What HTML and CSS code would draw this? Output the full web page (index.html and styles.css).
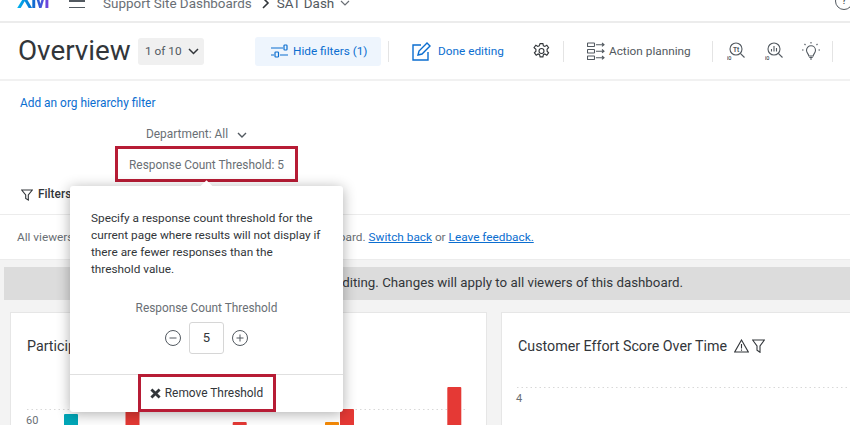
FILE: index.html
```html
<!DOCTYPE html>
<html lang="en">
<head>
<meta charset="utf-8">
<title>SAT Dash</title>
<link rel="stylesheet" href="styles.css">
</head>
<body>
<div class="page">
  <header class="topbar">
    <span class="logo">XM</span>
    <span class="burger"><i></i><i></i></span>
    <span class="crumb">Support Site Dashboards</span>
    <svg class="crumb-sep" width="8" height="12" viewBox="0 0 8 12"><path d="M1 1l5 5-5 5" fill="none" stroke="#32363a" stroke-width="1.6"/></svg>
    <span class="crumb crumb-current">SAT Dash</span>
    <svg class="crumb-caret" width="10" height="6" viewBox="0 0 10 6"><path d="M1 1l4 4 4-4" fill="none" stroke="#6a6f75" stroke-width="1.2"/></svg>
    <span class="help">?</span>
  </header>

  <section class="toolbar">
    <h1 class="title">Overview</h1>
    <button class="pager">1 of 10
      <svg width="11" height="7" viewBox="0 0 11 7"><path d="M1 1l4.500 4.500L10 1" fill="none" stroke="#32363a" stroke-width="1.500"/></svg>
    </button>
    <button class="hide-filters">
      <svg width="17" height="14" viewBox="0 0 17 14" fill="none" stroke="#0b6ed0" stroke-width="1.200"><path d="M0 4h12M0 11h3M9 11h8"/><rect x="13" y="1" width="3" height="5" rx=".8"/><rect x="4" y="8" width="3.500" height="5" rx=".8"/></svg>
      Hide filters (1)
    </button>
    <span class="sep sep-a"></span>
    <svg class="edit-icon" width="19" height="19" viewBox="0 0 19 19" fill="none" stroke="#0b6ed0" stroke-width="1.400"><path d="M9 3H1v15h15v-8"/><path d="M6 13l1-4L15 1l3 3-8 8z"/></svg>
    <span class="done">Done editing</span>
    <svg class="gear" width="17" height="18" viewBox="0 0 24 24" fill="none" stroke="#32363a" stroke-width="1.600"><circle cx="12" cy="12" r="3.500"/><path d="M10 1.500h4l.7 3.200 2 .9 2.800-1.700 2.500 3.400-2.100 2.200v2.800l2.100 2.200-2.500 3.400-2.800-1.700-2 .9-.7 3.200h-4l-.7-3.200-2-.9-2.800 1.700-2.500-3.400 2.100-2.200V9.500L1.500 7.300 4 3.900l2.800 1.700 2-.9z"/></svg>
    <span class="sep sep-b"></span>
    <svg class="plan-icon" width="18" height="18" viewBox="0 0 18 18" fill="none" stroke="#525960" stroke-width="1.100"><rect x=".5" y="1" width="7" height="3.500" rx=".5"/><rect x=".5" y="7.500" width="7" height="3.500" rx=".5"/><rect x=".5" y="14" width="7" height="3.500" rx=".5"/><path d="M9 2.700h8M9 9.200h8M9 15.700h8M15 1l2 1.700-2 1.700M15 7.500l2 1.700-2 1.700M15 14l2 1.700-2 1.700"/></svg>
    <span class="plan">Action planning</span>
    <span class="sep sep-c"></span>
    <svg class="iq iq-a" width="18" height="18" viewBox="0 0 18 18" fill="none" stroke="#525960" stroke-width="1.100"><circle cx="9" cy="7" r="6"/><path d="M13.300 11.300L17.500 15.500"/><text class="iq-glyph" x="9" y="9.500">Tt</text><text class="iq-tag" x="0" y="18">iQ</text></svg>
    <svg class="iq iq-b" width="18" height="18" viewBox="0 0 18 18" fill="none" stroke="#525960" stroke-width="1.100"><circle cx="9" cy="7" r="6"/><path d="M13.300 11.300L17.500 15.500"/><path d="M6.500 7v2.500M9 4v5.500M11.500 6v3.500" stroke-width="1.100"/><text class="iq-tag" x="0" y="18">iQ</text></svg>
    <svg class="bulb" width="18" height="18" viewBox="0 0 18 18" fill="none" stroke="#525960" stroke-width="1.100"><path d="M6.800 14c0-2-2.300-3-2.300-5.700a4.500 4.500 0 0 1 9 0C13.500 11 11.200 12 11.200 14z"/><path d="M7.300 15.500h3.400M8 17h2"/><path d="M9 0v1.500M2.500 2l1 1M15.500 2l-1 1M0 8h1.500M16.500 8H18"/></svg>
    <span class="sep sep-d"></span>
  </section>

  <section class="filters">
    <a class="org-link">Add an org hierarchy filter</a>
    <div class="dept">Department: All
      <svg width="10" height="6" viewBox="0 0 10 6"><path d="M1 1l4 4 4-4" fill="none" stroke="#525960" stroke-width="1.400"/></svg>
    </div>
    <div class="threshold">Response Count Threshold: 5</div>
    <div class="filter-row">
      <svg width="12" height="12" viewBox="0 0 12 12"><path d="M.7 1h10.600L7.300 6v5l-2.600-1.600V6z" fill="none" stroke="#32363a" stroke-width="1.100"/></svg>
      <b>Filters</b>
    </div>
  </section>

  <section class="notice">All viewers will now be shown the newer version of this dashboard. <a>Switch back</a> or <a>Leave feedback.</a></section>

  <main class="canvas">
    <div class="banner">You are now in dashboard editing. Changes will apply to all viewers of this dashboard.</div>
    <div class="cards">
      <article class="card card-a">
        <h2>Participation</h2>
        <svg class="chart" width="477" height="73" viewBox="0 0 477 73">
          <line class="grid" x1="16" x2="456" y1="56.500" y2="56.500"/>
          <text class="tick" x="15" y="71">60</text>
          <rect class="teal" x="53" y="61" width="14" height="20" rx="1"/>
          <rect class="red" x="114.500" y="50" width="14" height="30" rx="1"/>
          <rect class="red" x="221.700" y="69" width="14" height="12" rx="1"/>
          <rect class="orange" x="314" y="69" width="14" height="12" rx="1"/>
          <rect class="red" x="329" y="56" width="14" height="24" rx="1"/>
          <rect class="red" x="436.300" y="34" width="14" height="46" rx="1"/>
        </svg>
      </article>
      <article class="card card-b">
        <h2>Customer Effort Score Over Time
          <svg class="warn" width="15" height="14" viewBox="0 0 15 14" fill="none" stroke="#32363a" stroke-width="1.100"><path d="M7.500 1L14.300 13H.7z"/><path d="M7.500 5v4.500M7.500 10.500v1.200"/></svg>
          <svg class="funnel" width="13" height="14" viewBox="0 0 13 14" fill="none" stroke="#32363a" stroke-width="1.100"><path d="M.6 1h11.800L8 7v6.300l-3-2V7z"/></svg>
        </h2>
        <svg class="chart" width="349" height="73" viewBox="0 0 349 73">
          <line class="grid" x1="15" x2="349" y1="34.500" y2="34.500"/>
          <text class="tick" x="14" y="49">4</text>
        </svg>
      </article>
    </div>
  </main>

  <aside class="popover">
    <span class="arrow"></span>
    <div class="pop-body">
      <p>Specify a response count threshold for the current page where results will not display if there are fewer responses than the threshold value.</p>
      <div class="pop-label">Response Count Threshold</div>
      <div class="stepper">
        <svg width="16" height="16" viewBox="0 0 16 16" fill="none" stroke="#525960" stroke-width="1"><circle cx="8" cy="8" r="7.500"/><path d="M4.500 8h7"/></svg>
        <span class="value">5</span>
        <svg width="16" height="16" viewBox="0 0 16 16" fill="none" stroke="#525960" stroke-width="1"><circle cx="8" cy="8" r="7.500"/><path d="M4.500 8h7M8 4.500v7"/></svg>
      </div>
    </div>
    <div class="pop-foot">
      <button class="remove">
        <svg width="11" height="11" viewBox="0 0 11 11"><path d="M1.400 1.400l8.200 8.200M9.600 1.400L1.400 9.600" stroke="#32363a" stroke-width="2.800"/></svg>
        Remove Threshold
      </button>
    </div>
  </aside>
</div>
</body>
</html>
```

FILE: styles.css
```css
* { box-sizing: border-box; }
html, body { margin: 0; padding: 0; }
body {
  font-family: Roboto, "Open Sans", sans-serif;
  color: #32363a;
  background: #fff;
}
button { font: inherit; border: 0; color: inherit; padding: 0; }
.page {
  position: relative;
  width: 850px;
  height: 425px;
  overflow: hidden;
  display: flex;
  flex-direction: column;
}

/* Top bar, cut by the top of the window */
.topbar {
  flex: none;
  height: 23px;
  border-bottom: 2px solid #ececec;
  display: flex;
  align-items: flex-end;
  padding: 0 0 15px 17px;
  overflow: visible;
}
.logo {
  width: 32px;
  font-family: "Liberation Sans", sans-serif;
  font-size: 23px;
  line-height: 24px;
  height: 24px;
  font-weight: 700;
  letter-spacing: -1.500px;
  background: linear-gradient(90deg, #00b4ef, #0b6ed0 50%, #7a3fe0);
  -webkit-background-clip: text;
  background-clip: text;
  color: transparent;
  margin-bottom: -6px;
}
.burger {
  margin-left: 20px;
  width: 16px;
  display: flex;
  flex-direction: column;
  gap: 5px;
  margin-bottom: -2px;
}
.burger i { display: block; height: 1.500px; background: #525960; }
.crumb {
  margin-left: 18px;
  font-size: 13.450px;
  line-height: 18px;
  color: #6a6f75;
  margin-bottom: -7px;
  white-space: nowrap;
}
.crumb-current { margin-left: 7px; color: #525960; }
.crumb-sep { margin-left: 10px; margin-bottom: -3px; }
.crumb-caret { margin-left: 6px; margin-bottom: 0; }
.help {
  margin-left: auto;
  margin-right: -3px;
  width: 18px;
  height: 18px;
  border: 1.200px solid #525960;
  border-radius: 50%;
  font-size: 11px;
  line-height: 15px;
  text-align: center;
  margin-bottom: -4px;
}

/* Toolbar */
.toolbar {
  flex: none;
  height: 58px;
  border-bottom: 2px solid #f1f1f1;
  display: flex;
  align-items: center;
  padding: 0 0 0 18px;
}
.title { margin: 0; font-size: 27.800px; font-weight: 400; line-height: 36px; width: 120px; white-space: nowrap; }
.pager {
  width: 66px;
  height: 27px;
  padding-left: 7px;
  background: #f0f0f0;
  border-radius: 3px;
  font-size: 11.800px;
  color: #525960;
  display: flex;
  align-items: center;
  gap: 6px;
}
.hide-filters {
  margin-left: 51px;
  width: 126px;
  height: 29px;
  padding-left: 16px;
  background: #eef5fd;
  border-radius: 3px;
  color: #0b6ed0;
  font-size: 11.800px;
  display: flex;
  align-items: center;
  gap: 5px;
}
.sep { width: 1px; height: 21px; background: #e4e4e4; }
.sep-a { margin-left: 7px; }
.edit-icon { margin-left: 23px; }
.done { margin-left: 7px; width: 66px; font-size: 11.800px; color: #0b6ed0; white-space: nowrap; }
.gear { margin-left: 29px; }
.sep-b { margin-left: 13px; }
.plan-icon { margin-left: 23px; }
.plan { margin-left: 4px; width: 81px; font-size: 11.800px; color: #525960; white-space: nowrap; }
.sep-c { margin-left: 22px; }
.iq-a { margin-left: 14px; }
.iq-b { margin-left: 20px; }
.bulb { margin-left: 19px; }
.sep-d { margin-left: 12px; }
.iq-glyph { font-size: 6.500px; font-weight: 700; fill: #525960; stroke: none; text-anchor: middle; }
.iq-tag { font-size: 4.500px; font-weight: 700; fill: #525960; stroke: none; }

/* Filters */
.filters {
  flex: none;
  height: 134px;
  border-bottom: 1px solid #ececec;
  display: flex;
  flex-direction: column;
  align-items: flex-start;
  padding: 14px 0 0 20px;
  font-size: 11.900px;
}
.org-link { color: #0b6ed0; line-height: 17px; }
.dept {
  margin: 14px 0 0 126px;
  line-height: 17px;
  color: #6a6f75;
  display: flex;
  align-items: center;
  gap: 9px;
}
.threshold {
  margin: 3px 0 0 95px;
  width: 183px;
  height: 36px;
  padding-top: 2px;
  border: 3px solid #b71c35;
  color: #6a6f75;
  display: flex;
  align-items: center;
  justify-content: center;
}
.filter-row {
  margin: 4px 0 0 1px;
  display: flex;
  align-items: center;
  gap: 5px;
  line-height: 17px;
}
.filter-row b { font-weight: 500; }

/* Notice */
.notice {
  flex: none;
  height: 45px;
  padding: 14px 0 0 17px;
  font-size: 11.800px;
  line-height: 17px;
  color: #6a6f75;
  border-bottom: 1px solid #ececec;
  white-space: nowrap;
}
.notice a { color: #0b6ed0; text-decoration: underline; }

/* Dashboard canvas */
.canvas {
  flex: 1;
  min-height: 0;
  background: #f3f3f3;
  padding: 7px 0 0 4px;
  display: flex;
  flex-direction: column;
}
.banner {
  flex: none;
  height: 33px;
  padding-left: 8px;
  background: #dcdcdc;
  font-size: 13.300px;
  line-height: 32px;
  text-align: center;
  white-space: nowrap;
}
.cards {
  flex: 1;
  display: flex;
  gap: 14px;
  margin: 12px 0 0 6px;
}
.card {
  background: #fff;
  border: 1px solid #e6e6e6;
  border-bottom: 0;
  height: 114px;
}
.card-a { width: 477px; }
.card-b { width: 349px; border-right: 0; }
.card h2 {
  margin: 0;
  height: 40px;
  padding: 25px 0 0 16px;
  font-size: 14.250px;
  font-weight: 400;
  line-height: 20px;
  white-space: nowrap;
  display: flex;
  align-items: center;
}
.warn { margin-left: 7px; }
.funnel { margin-left: 3px; }
.chart { display: block; margin-left: 0; }
.grid { stroke: #d8d8d8; stroke-dasharray: 1.500 3; }
.tick { font-size: 11px; fill: #6a6f75; }
.red { fill: #e53935; }
.teal { fill: #00a7b8; }
.orange { fill: #f58a07; }

/* Popover */
.popover {
  position: absolute;
  left: 70px;
  top: 186px;
  width: 273px;
  height: 226px;
  background: #fff;
  border-radius: 3px;
  box-shadow: 0 2px 14px rgba(0, 0, 0, .32);
  display: flex;
  flex-direction: column;
}
.arrow {
  position: absolute;
  left: 132px;
  top: -4px;
  width: 9px;
  height: 9px;
  background: #fff;
  transform: rotate(45deg);
}
.pop-body {
  position: relative;
  flex: 1;
  padding: 24px 21px 0 21px;
}
.pop-body p {
  margin: 0;
  font-size: 11.800px;
  line-height: 17px;
}
.pop-label {
  margin-top: 22px;
  text-align: center;
  font-size: 11.850px;
  line-height: 17px;
  color: #6a6f75;
}
.stepper {
  margin-top: 5px;
  display: flex;
  align-items: center;
  justify-content: center;
  gap: 8px;
}
.value {
  width: 35px;
  height: 32px;
  border: 1px solid #d6d6d6;
  border-radius: 3px;
  font-size: 13px;
  line-height: 30px;
  text-align: center;
}
.pop-foot {
  flex: none;
  height: 38px;
  border-top: 1px solid #e0e0e0;
  display: flex;
  justify-content: center;
  position: relative;
}
.remove {
  margin-top: -1px;
  width: 138px;
  height: 38px;
  background: #fff;
  border: 3px solid #b71c35;
  font-size: 11.900px;
  display: flex;
  align-items: center;
  justify-content: center;
  gap: 4px;
}
```
